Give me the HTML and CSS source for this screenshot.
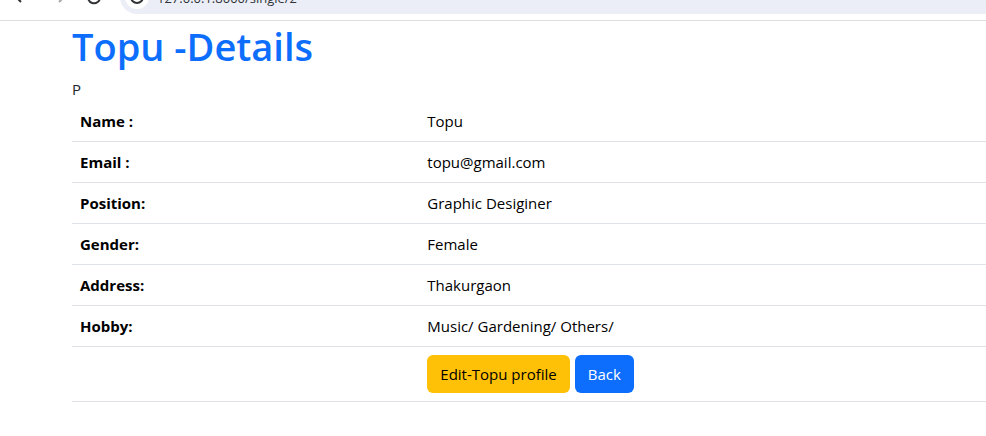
FILE: index.html
```html
<!DOCTYPE html>
<html lang="en">
<head>
  <meta charset="utf-8">
  <meta name="viewport" content="width=device-width, initial-scale=1">
  <title>Topu - Details</title>
  <link rel="stylesheet" href="styles.css">
</head>
<body>
  <header class="toolbar">
    <nav class="toolbar-nav" aria-label="Browser">
      <button class="tool" type="button" aria-label="Go back">
        <svg viewBox="0 0 20 20" width="20" height="20"><path d="M17 10H4M9 5l-5 5 5 5"/></svg>
      </button>
      <button class="tool tool-muted" type="button" aria-label="Go forward">
        <svg viewBox="0 0 20 20" width="20" height="20"><path d="M3 10h13M11 5l5 5-5 5"/></svg>
      </button>
      <button class="tool" type="button" aria-label="Reload">
        <svg viewBox="0 0 20 20" width="20" height="20"><path d="M15 7A6 6 0 1 0 16 10M16 3v5h-5"/></svg>
      </button>
    </nav>
    <div class="omnibox">
      <span class="site-info">
        <svg viewBox="0 0 20 20" width="20" height="20"><circle cx="10" cy="10" r="6"/><path d="M10 9v4M10 6v1"/></svg>
      </span>
      <input class="url" type="text" aria-label="Address" value="127.0.0.1:8000/single/2">
    </div>
  </header>

  <main class="container">
    <h1 class="title">Topu -Details</h1>
    <div class="note">P</div>
    <table class="table">
      <tbody>
        <tr><th scope="row">Name :</th><td>Topu</td></tr>
        <tr><th scope="row">Email :</th><td>topu@gmail.com</td></tr>
        <tr><th scope="row">Position:</th><td>Graphic Desiginer</td></tr>
        <tr><th scope="row">Gender:</th><td>Female</td></tr>
        <tr><th scope="row">Address:</th><td>Thakurgaon</td></tr>
        <tr><th scope="row">Hobby:</th><td>Music/ Gardening/ Others/</td></tr>
        <tr>
          <td></td>
          <td>
            <div class="actions">
              <a class="btn btn-warning" href="#">Edit-Topu profile</a>
              <a class="btn btn-primary" href="#">Back</a>
            </div>
          </td>
        </tr>
      </tbody>
    </table>
  </main>
</body>
</html>
```
FILE: styles.css
```css
* {
  box-sizing: border-box;
}

body {
  margin: 0;
  background: #fff;
  color: #212529;
  font-family: "Segoe UI", "Open Sans", "Noto Sans", sans-serif;
  font-size: 15px;
  line-height: 24px;
}

.toolbar {
  display: flex;
  align-items: flex-end;
  height: 21px;
  padding-bottom: 6px;
  border-bottom: 1px solid #dedede;
  overflow: hidden;
}

.toolbar-nav {
  display: flex;
  flex: none;
  width: 120px;
  padding-left: 4px;
}

.tool {
  display: grid;
  place-items: center;
  width: 36px;
  height: 34px;
  padding: 0;
  border: 0;
  background: none;
}

.tool svg,
.site-info svg {
  fill: none;
  stroke: #303236;
  stroke-width: 2;
}

.tool-muted svg {
  stroke: #a5a7aa;
}

.omnibox {
  display: flex;
  flex: 1;
  align-items: center;
  gap: 8px;
  height: 34px;
  padding-left: 5px;
  border-radius: 17px 0 0 17px;
  background: #ebeef7;
}

.site-info {
  display: grid;
  place-items: center;
  width: 24px;
  height: 24px;
  border-radius: 50%;
  background: #fff;
}

.url {
  flex: 1;
  min-width: 0;
  padding: 2px 0 0;
  border: 0;
  background: none;
  color: #303236;
  font: inherit;
  font-size: 13px;
}

.container {
  padding-left: 72px;
}

.title {
  margin: 0 0 8px;
  color: #0d6efd;
  font-size: 38px;
  font-weight: 600;
  line-height: 50px;
  margin-bottom: 6px;
}

.table {
  width: 100%;
  border-collapse: separate;
  border-spacing: 0;
  table-layout: fixed;
  color: #000;
}

.table th,
.table td {
  padding: 8px;
  border-bottom: 1px solid #dee2e6;
  text-align: left;
}

.table tr > :first-child {
  width: 38%;
}

.actions {
  display: flex;
  gap: 5px;
}

.btn {
  padding: 7px 13px;
  border-radius: 6px;
  text-decoration: none;
}

.btn-warning {
  background: #ffc107;
  color: #000;
}

.btn-primary {
  background: #0d6efd;
  color: #fff;
}
```
